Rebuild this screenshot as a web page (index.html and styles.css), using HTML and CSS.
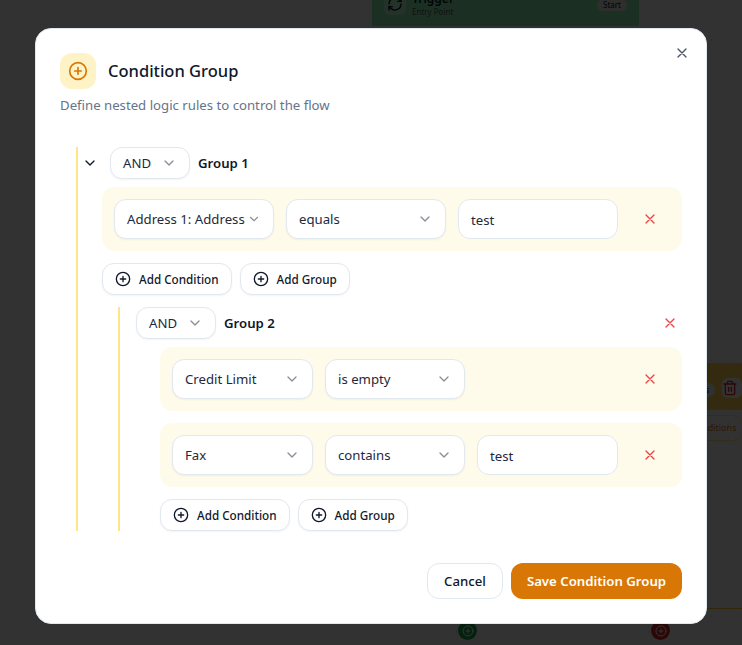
FILE: index.html
```html
<!DOCTYPE html>
<html lang="en">
<head>
    <meta charset="UTF-8">
    <title>Condition Group</title>
    <link rel="stylesheet" href="styles.css">
</head>
<body>
    <svg width="0" height="0" class="defs">
        <symbol id="chev" viewBox="0 0 24 24"><path d="M6 9l6 6 6-6" fill="none" stroke="currentColor" stroke-width="2" stroke-linecap="round" stroke-linejoin="round"/></symbol>
        <symbol id="plus" viewBox="0 0 24 24"><g fill="none" stroke="currentColor" stroke-width="2" stroke-linecap="round"><circle cx="12" cy="12" r="10"/><path d="M12 8v8M8 12h8"/></g></symbol>
        <symbol id="cross" viewBox="0 0 24 24"><path d="M18 6L6 18M6 6l12 12" fill="none" stroke="currentColor" stroke-width="2" stroke-linecap="round"/></symbol>
        <symbol id="refresh" viewBox="0 0 24 24"><g fill="none" stroke="currentColor" stroke-width="2" stroke-linecap="round" stroke-linejoin="round"><path d="M3 12a9 9 0 0 1 15-6.7L21 8"/><path d="M21 3v5h-5"/><path d="M21 12a9 9 0 0 1-15 6.7L3 16"/><path d="M3 21v-5h5"/></g></symbol>
        <symbol id="trash" viewBox="0 0 24 24"><g fill="none" stroke="currentColor" stroke-width="2" stroke-linecap="round" stroke-linejoin="round"><path d="M3 6h18M19 6v14a2 2 0 0 1-2 2H7a2 2 0 0 1-2-2V6M8 6V4a2 2 0 0 1 2-2h4a2 2 0 0 1 2 2v2M10 11v6M14 11v6"/></g></symbol>
    </svg>

    <!-- Canvas behind the overlay -->
    <div class="canvas">
        <div class="node-start">
            <span class="node-icon"><svg class="ic16"><use href="#refresh"/></svg></span>
            <div class="node-title">Trigger</div>
            <div class="node-sub">Entry Point</div>
            <span class="node-badge">Start</span>
        </div>
        <div class="node-cond">
            <span class="node-pill-s">Rules</span>
            <span class="node-trash"><svg class="ic16"><use href="#trash"/></svg></span>
        </div>
        <span class="node-pill">Conditions</span>
        <span class="node-line"></span>
        <span class="dot dot-green"><svg class="ic12"><use href="#plus"/></svg></span>
        <span class="dot dot-red"><svg class="ic12"><use href="#plus"/></svg></span>
    </div>

    <div class="overlay">
        <div class="modal">
            <button class="close"><svg class="ic16"><use href="#cross"/></svg></button>
            <div class="modal-head">
                <span class="head-icon"><svg class="ic20"><use href="#plus"/></svg></span>
                <h2>Condition Group</h2>
            </div>
            <p class="modal-desc">Define nested logic rules to control the flow</p>

            <div class="group group-root">
                <div class="group-head">
                    <svg class="ic16 toggle"><use href="#chev"/></svg>
                    <div class="select sel-and">AND<svg class="ic16"><use href="#chev"/></svg></div>
                    <span class="group-name">Group 1</span>
                </div>
                <div class="rule">
                    <div class="select sel-field">Address 1: Address<svg class="ic14"><use href="#chev"/></svg></div>
                    <div class="select sel-field">equals<svg class="ic16"><use href="#chev"/></svg></div>
                    <div class="input">test</div>
                    <button class="del"><svg class="ic16"><use href="#cross"/></svg></button>
                </div>
                <div class="actions">
                    <button class="add"><svg class="ic16"><use href="#plus"/></svg>Add Condition</button>
                    <button class="add"><svg class="ic16"><use href="#plus"/></svg>Add Group</button>
                </div>

                <div class="group group-nested">
                    <div class="group-head">
                        <div class="select sel-and">AND<svg class="ic16"><use href="#chev"/></svg></div>
                        <span class="group-name">Group 2</span>
                        <button class="del head-del"><svg class="ic16"><use href="#cross"/></svg></button>
                    </div>
                    <div class="rules">
                        <div class="rule">
                            <div class="select sel-wide">Credit Limit<svg class="ic16"><use href="#chev"/></svg></div>
                            <div class="select sel-op">is empty<svg class="ic16"><use href="#chev"/></svg></div>
                            <button class="del push"><svg class="ic16"><use href="#cross"/></svg></button>
                        </div>
                        <div class="rule">
                            <div class="select sel-wide">Fax<svg class="ic16"><use href="#chev"/></svg></div>
                            <div class="select sel-op">contains<svg class="ic16"><use href="#chev"/></svg></div>
                            <div class="input">test</div>
                            <button class="del"><svg class="ic16"><use href="#cross"/></svg></button>
                        </div>
                    </div>
                    <div class="actions">
                        <button class="add"><svg class="ic16"><use href="#plus"/></svg>Add Condition</button>
                        <button class="add"><svg class="ic16"><use href="#plus"/></svg>Add Group</button>
                    </div>
                </div>
            </div>

            <div class="modal-foot">
                <button class="btn-cancel">Cancel</button>
                <button class="btn-save">Save Condition Group</button>
            </div>
        </div>
    </div>
</body>
</html>
```
FILE: styles.css
```css
* {
    box-sizing: border-box;
}
html, body {
    height: 100%;
}
body {
    margin: 0;
    overflow: hidden;
    background-color: #fafafa;
    background-image: radial-gradient(#d4d4d8 1px, transparent 1px);
    background-size: 16px 16px;
    font-family: "Noto Sans", sans-serif;
    color: #0f172a;
}
button {
    font-family: inherit;
    cursor: pointer;
}
.defs {
    position: absolute;
}
.ic12 {
    width: 12px;
    height: 12px;
    flex: none;
}
.ic14 {
    width: 14px;
    height: 14px;
    flex: none;
}
.ic16 {
    width: 16px;
    height: 16px;
    flex: none;
}
.ic20 {
    width: 20px;
    height: 20px;
    flex: none;
}

/* canvas behind */
.canvas {
    position: absolute;
    inset: 0;
    overflow: hidden;
}
.node-start {
    position: absolute;
    left: 372px;
    top: -20px;
    width: 267px;
    height: 46px;
    background: #86efac;
    padding: 12px 0 0 40px;
}
.node-icon {
    position: absolute;
    left: 12px;
    top: 13px;
    width: 22px;
    height: 22px;
    border-radius: 6px;
    background: #bbf7d0;
    display: flex;
    align-items: center;
    justify-content: center;
}
.node-title {
    font-size: 12px;
    font-weight: 600;
    line-height: 14px;
}
.node-sub {
    font-size: 8px;
    line-height: 12px;
    color: #555;
}
.node-badge {
    position: absolute;
    right: 12px;
    top: 19px;
    font-size: 8px;
    line-height: 12px;
    background: #e5e5e5;
    border-radius: 8px;
    padding: 0 6px;
}
.node-cond {
    position: absolute;
    left: 640px;
    top: 363px;
    width: 102px;
    height: 47px;
    background: #fcd34d;
}
.node-pill-s {
    position: absolute;
    right: 27px;
    top: 20px;
    font-size: 9px;
    line-height: 14px;
    background: #f5f5f5;
    border-radius: 8px;
    padding: 0 6px;
}
.node-trash {
    position: absolute;
    left: 82px;
    top: 15px;
    width: 20px;
    height: 20px;
    border-radius: 6px;
    background: #fafafa;
    color: #dc2626;
    display: flex;
    align-items: center;
}
.node-pill {
    position: absolute;
    left: 670px;
    top: 415px;
    padding: 5px 6px 5px 20px;
    font-size: 9px;
    line-height: 14px;
    color: #d97706;
    border: 1px solid #fde68a;
    border-radius: 10px;
}
.node-line {
    position: absolute;
    left: 640px;
    top: 608px;
    width: 102px;
    height: 1px;
    background: #fbbf24;
}
.dot {
    position: absolute;
    top: 621px;
    width: 19px;
    height: 19px;
    border-radius: 50%;
    color: #fff;
    display: flex;
    align-items: center;
    justify-content: center;
}
.dot-green {
    left: 458px;
    background: #16a34a;
}
.dot-red {
    left: 651px;
    background: #dc2626;
}
.overlay {
    position: absolute;
    inset: 0;
    background: rgba(0, 0, 0, 0.8);
    display: flex;
    justify-content: center;
    align-items: flex-start;
    padding-top: 28px;
}

/* modal */
.modal {
    position: relative;
    width: 672px;
    height: 596px;
    background: #fff;
    border: 1px solid #e2e8f0;
    border-radius: 16px;
    padding: 24px 24px 0 24px;
    display: flex;
    flex-direction: column;
}
.close {
    position: absolute;
    right: 16px;
    top: 16px;
    padding: 0;
    border: none;
    background: none;
    color: #4b5563;
    display: flex;
}
.modal-head {
    display: flex;
    align-items: center;
    gap: 12px;
}
.head-icon {
    width: 36px;
    height: 36px;
    border-radius: 12px;
    background: #fef3c7;
    color: #d97706;
    display: flex;
    align-items: center;
    justify-content: center;
}
.modal-head h2 {
    margin: 0;
    font-size: 16.5px;
    font-weight: 500;
    line-height: 28px;
}
.modal-desc {
    margin: 6px 0 0;
    font-size: 13.2px;
    line-height: 20px;
    color: #64748b;
}

/* groups */
.group {
    border-left: 2px solid #fde68a;
    display: flex;
    flex-direction: column;
}
.group-root {
    margin: 32px 0 0 16px;
    padding: 0 0 0 24px;
    height: 384px;
}
.group-nested {
    margin: 12px 0 0 16px;
    padding-left: 16px;
    height: 224px;
}
.group-head {
    display: flex;
    align-items: center;
    height: 32px;
    gap: 8px;
    flex: none;
}
.toggle {
    margin: 0 4px 0 -20px;
    color: #0f172a;
}
.group-name {
    font-size: 13.2px;
    font-weight: 600;
}
.select, .input {
    height: 40px;
    background: #fff;
    border: 1px solid #e2e8f0;
    border-radius: 12px;
    font-size: 13.2px;
    color: #1e293b;
    display: flex;
    align-items: center;
    justify-content: space-between;
    padding: 0 12px;
    box-shadow: 0 1px 2px rgba(0, 0, 0, 0.05);
    white-space: nowrap;
    flex: none;
}
.select svg {
    color: #8b8f97;
}
.input {
    width: 160px;
    box-shadow: none;
    justify-content: flex-start;
    padding-top: 2px;
}
.sel-and {
    width: 80px;
    height: 32px;
}
.sel-field {
    width: 160px;
}
.sel-wide {
    width: 141px;
}
.sel-op {
    width: 140px;
}
.rule {
    display: flex;
    align-items: center;
    gap: 12px;
    height: 64px;
    padding: 0 12px;
    margin-top: 8px;
    background: #fffbeb;
    border-radius: 12px;
    flex: none;
}
.rules {
    margin: 8px 0 0 24px;
    display: flex;
    flex-direction: column;
    gap: 12px;
}
.rules .rule {
    margin-top: 0;
}
.rules .input {
    width: 141px;
}
.del {
    padding: 0;
    border: none;
    background: none;
    color: #ef4444;
    display: flex;
    margin-left: 12px;
}
.del.push {
    margin-left: auto;
    margin-right: 12px;
}
.head-del {
    margin-left: auto;
    margin-right: 4px;
}
.actions {
    display: flex;
    gap: 8px;
    margin-top: 12px;
    flex: none;
}
.group-nested .actions {
    margin-left: 24px;
}
.add {
    height: 32px;
    display: flex;
    align-items: center;
    gap: 8px;
    padding: 0 12px;
    background: #fff;
    border: 1px solid #e2e8f0;
    border-radius: 12px;
    font-size: 11.7px;
    font-weight: 500;
    color: #0f172a;
    box-shadow: 0 1px 2px rgba(0, 0, 0, 0.05);
}

/* footer */
.modal-foot {
    margin-top: 32px;
    display: flex;
    justify-content: flex-end;
    gap: 8px;
}
.btn-cancel, .btn-save {
    height: 36px;
    border-radius: 12px;
    font-size: 13.2px;
    font-weight: 500;
}
.btn-cancel {
    width: 76px;
    background: #fff;
    border: 1px solid #e2e8f0;
    color: #0f172a;
}
.btn-save {
    width: 171px;
    background: #d97706;
    border: none;
    color: #fff;
    font-weight: 600;
}
```
